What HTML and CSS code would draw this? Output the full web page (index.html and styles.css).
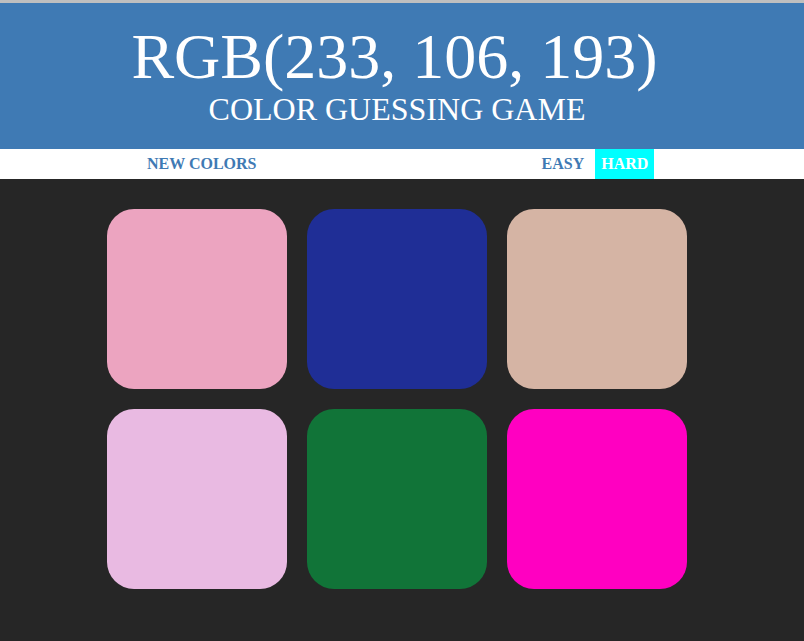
FILE: index.html
```html
<!DOCTYPE html>
<html>
<head>
<meta charset="utf-8">
<title>Color Game</title>
<link rel="stylesheet" href="styles.css">
</head>
<body>
<h1 class="title">
  <span class="rgb">RGB(233, 106, 193)</span>
  <span class="sub">Color Guessing Game</span>
</h1>
<div class="stripe">
  <button class="btn btn-reset">New Colors</button>
  <span class="message"></span>
  <button class="btn mode">Easy</button>
  <button class="btn mode selected">Hard</button>
</div>
<div class="container">
  <div class="square" style="background: #eca4c0"></div>
  <div class="square" style="background: #1f2e96"></div>
  <div class="square" style="background: #d5b4a4"></div>
  <div class="square" style="background: #e9bae2"></div>
  <div class="square" style="background: #117438"></div>
  <div class="square" style="background: #ff00c1"></div>
</div>
</body>
</html>
```
FILE: styles.css
```css
html, body {
  margin: 0;
  padding: 0;
}
body {
  background: #262626;
  font-family: "Liberation Serif", "Times New Roman", serif;
  border-top: 3px solid #bfbfbf;
  min-height: 638px;
}
.title {
  margin: 0;
  background: #3f7ab4;
  color: #fff;
  font-weight: normal;
  text-transform: uppercase;
  text-align: center;
  padding: 19px 10px 21px 0;
  line-height: 1.1;
  font-size: 32px;
}
.rgb {
  display: block;
  font-size: 64px;
  margin-right: 5px;
}
.sub {
  display: block;
}
.stripe {
  background: #fff;
  height: 30px;
  display: flex;
  align-items: stretch;
  padding-left: 141px;
}
.btn {
  border: none;
  background: none;
  font-family: "Liberation Serif", "Times New Roman", serif;
  font-weight: 700;
  font-size: 16px;
  text-transform: uppercase;
  color: #3f7ab4;
  padding: 0 6px;
  margin: 0;
  height: 100%;
}
.message {
  width: 273px;
}
.mode.selected {
  background: #00ffff;
  color: #fff;
  margin-left: 5px;
}
.container {
  display: grid;
  grid-template-columns: repeat(3, 180px);
  grid-auto-rows: 180px;
  gap: 20px;
  justify-content: center;
  padding: 30px 10px 0 0;
}
.square {
  border-radius: 15%;
}
```
